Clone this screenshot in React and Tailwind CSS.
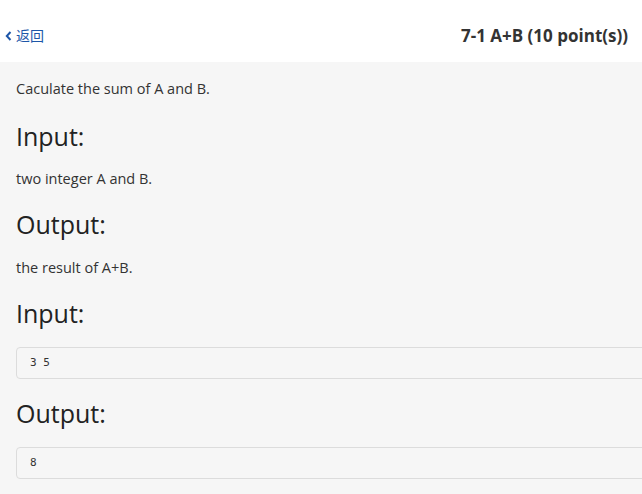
import React from "react";

const font = { fontFamily: '"Segoe UI", "Open Sans", "Noto Sans CJK SC", sans-serif' };

function SampleBox({ text }) {
  return (
    <div className="mt-[17px] w-[720px] h-[32px] border border-[#dcdcdc] rounded-[4px] flex items-center pl-[13px] text-[11px] text-[#333]">
      <pre className="font-['DejaVu_Sans_Mono',monospace]">{text}</pre>
    </div>
  );
}

function App() {
  return (
    <div className="w-[642px] h-[494px] overflow-hidden bg-[#f6f6f6] text-[#333]" style={font}>
      <div className="h-[62px] bg-white flex items-center justify-between pl-[5px] pr-[14px] pt-[9px]">
        <a className="flex items-center text-[14px] text-[#1d56a8] font-['Noto_Sans_CJK_SC',sans-serif]">
          <svg width="7" height="10" viewBox="0 0 7 10" className="mr-[4px]">
            <path d="M5.5 1 L1.8 5 L5.5 9" stroke="#1d56a8" strokeWidth="2" fill="none" />
          </svg>
          返回
        </a>
        <h1 className="text-[17px] font-bold text-[#333] font-['Open_Sans',sans-serif]">7-1 A+B (10 point(s))</h1>
      </div>
      <div className="pl-[16px] pt-[17px] font-['Open_Sans',sans-serif]">
        <p className="text-[14.5px] leading-[20px]">Caculate the sum of A and B.</p>
        <h2 className="mt-[20px] text-[25px] leading-[34px] text-[#222]">Input:</h2>
        <p className="mt-[16px] text-[14.5px] leading-[20px]">two integer A and B.</p>
        <h2 className="mt-[18px] text-[25px] leading-[34px] text-[#222]">Output:</h2>
        <p className="mt-[17px] text-[14.5px] leading-[20px]">the result of A+B.</p>
        <h2 className="mt-[18px] text-[25px] leading-[34px] text-[#222]">Input:</h2>
        <SampleBox text="3 5" />
        <h2 className="mt-[17px] text-[25px] leading-[34px] text-[#222]">Output:</h2>
        <SampleBox text="8" />
      </div>
    </div>
  );
}

export default App;
